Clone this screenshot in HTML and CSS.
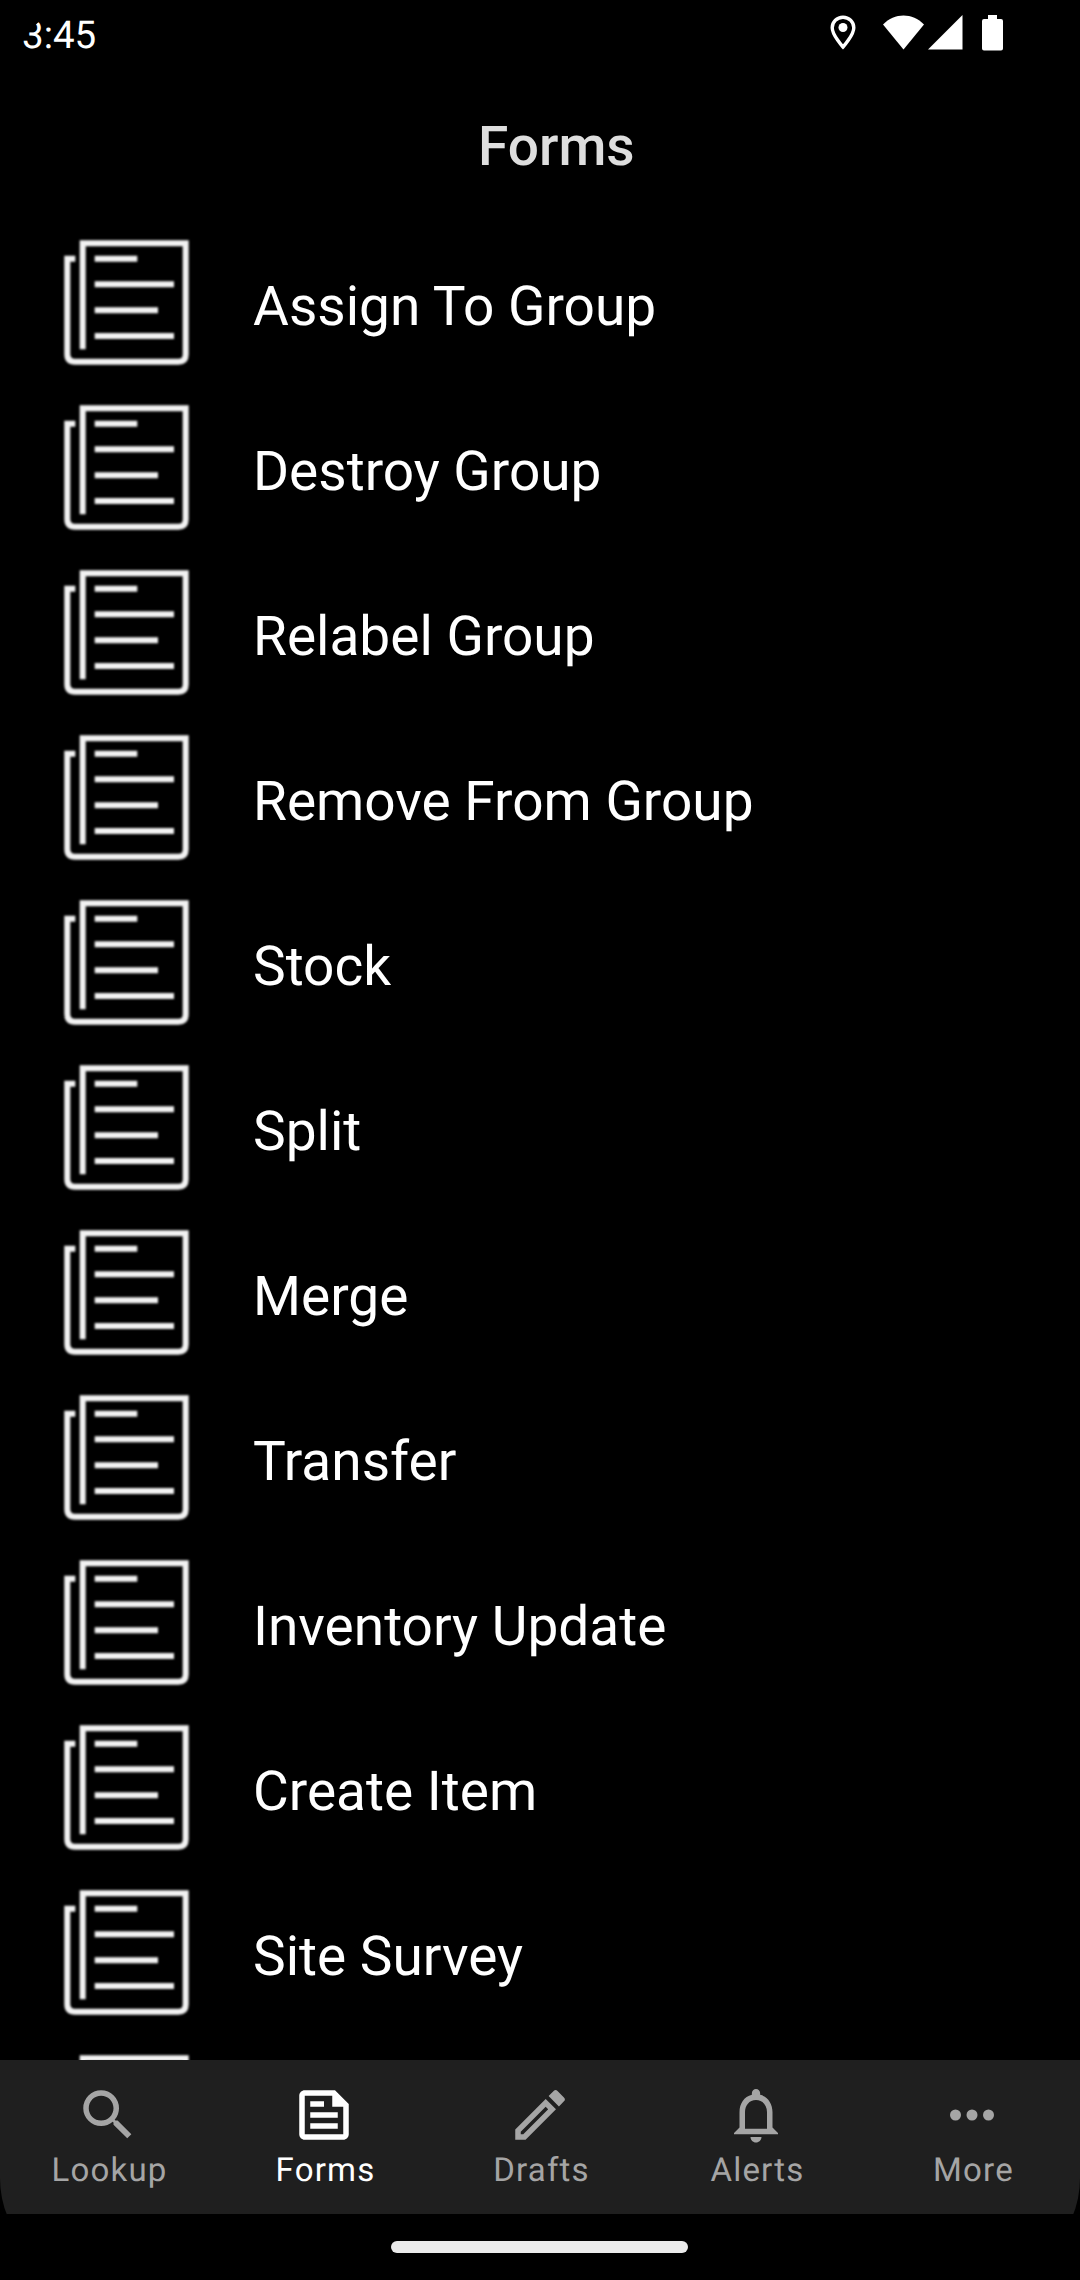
FILE: index.html
```
<!DOCTYPE html>
<html lang="en">
<head>
  <meta charset="UTF-8" />
  <meta name="viewport" content="width=device-width, initial-scale=1.0" />
  <title>Forms</title>
  <link rel="stylesheet" href="styles.css">
</head>
<body>
  <svg class="sprite" width="0" height="0">
    <symbol id="form-icon" viewBox="0 0 132 132">
      <path d="M22.7 113.3V7.3H125.7V118.5Q125.7 125.7 118.5 125.7H15Q7.3 125.7 7.3 118V22.7H15.3M34.7 22.7H77.3M34.7 48.3H114M34.7 74.3H98M34.7 100H114"/>
    </symbol>
  </svg>

  <div class="screen">
    <div class="status-bar">
      <span class="time">3:45</span>
      <div class="status-icons">
        <svg class="pin" viewBox="0 0 26 36"><path d="M13 2.2C7 2.2 2.2 6.9 2.2 12.7C2.2 20 13 32 13 32S23.8 20 23.8 12.7C23.8 6.9 19 2.2 13 2.2Z" fill="none" stroke="#fff" stroke-width="3.4"/><circle cx="13" cy="12.5" r="4.5"/></svg>
        <svg class="wifi" viewBox="0 0 42 35"><path d="M1 9.5C12.5 -2.5 30.5 -2.5 42 9.5L21.5 34.5Z"/></svg>
        <svg class="signal" viewBox="0 0 35 35"><path d="M0 34.5L34.5 0V34.5Z"/></svg>
        <svg class="battery" viewBox="0 0 21 36"><path d="M6 0H15V4H19Q21 4 21 6V33.5Q21 35.5 19 35.5H2Q0 35.5 0 33.5V6Q0 4 2 4H6Z"/></svg>
      </div>
    </div>

    <h1>Forms</h1>

    <ul class="form-list">
      <li><svg><use href="#form-icon"/></svg><span>Assign To Group</span></li>
      <li><svg><use href="#form-icon"/></svg><span>Destroy Group</span></li>
      <li><svg><use href="#form-icon"/></svg><span>Relabel Group</span></li>
      <li><svg><use href="#form-icon"/></svg><span>Remove From Group</span></li>
      <li><svg><use href="#form-icon"/></svg><span>Stock</span></li>
      <li><svg><use href="#form-icon"/></svg><span>Split</span></li>
      <li><svg><use href="#form-icon"/></svg><span>Merge</span></li>
      <li><svg><use href="#form-icon"/></svg><span>Transfer</span></li>
      <li><svg><use href="#form-icon"/></svg><span>Inventory Update</span></li>
      <li><svg><use href="#form-icon"/></svg><span>Create Item</span></li>
      <li><svg><use href="#form-icon"/></svg><span>Site Survey</span></li>
      <li><svg><use href="#form-icon"/></svg></li>
    </ul>

    <nav class="tabs">
      <a class="tab">
        <svg viewBox="0 0 24 24"><path d="M15.5 14h-.79l-.28-.27A6.471 6.471 0 0 0 16 9.5 6.5 6.5 0 1 0 9.5 16c1.61 0 3.09-.59 4.23-1.57l.27.28v.79l5 4.99L20.49 19l-4.99-5zm-6 0C7.01 14 5 11.99 5 9.5S7.01 5 9.5 5 14 7.01 14 9.5 11.99 14 9.5 14z"/></svg>
        <span>Lookup</span>
      </a>
      <a class="tab active">
        <svg viewBox="0 0 24 24"><path fill-rule="evenodd" d="M16 3H5C3.9 3 3 3.9 3 5v14c0 1.1.9 2 2 2h14c1.1 0 2-.9 2-2V8zM19 19H5V5h10v4h4zM7 7h5v2H7zM7 11h10v2H7zM7 15h10v2H7z"/></svg>
        <span>Forms</span>
      </a>
      <a class="tab">
        <svg viewBox="0 0 24 24"><path fill-rule="evenodd" d="M3 17.25V21h3.75L17.81 9.94l-3.75-3.75zM5.92 19H5v-.92l9.06-9.06.92.92zM20.71 5.63l-2.34-2.34a1 1 0 0 0-1.41 0l-1.83 1.83 3.75 3.75 1.83-1.83a1 1 0 0 0 0-1.41z"/></svg>
        <span>Drafts</span>
      </a>
      <a class="tab">
        <svg viewBox="0 0 24 24"><path fill-rule="evenodd" d="M12 22c1.1 0 2-.9 2-2h-4c0 1.1.9 2 2 2zM18 16.5V11c0-3.07-1.63-5.64-4.5-6.32V4c0-.83-.67-1.5-1.5-1.5s-1.5.67-1.5 1.5v.68C7.64 5.36 6 7.92 6 11v5.5l-2 2V19h16v-.5zM16 17H8v-6c0-2.48 1.51-4.5 4-4.5s4 2.02 4 4.5z"/></svg>
        <span>Alerts</span>
      </a>
      <a class="tab">
        <svg viewBox="0 0 24 24"><circle cx="6" cy="12" r="2"/><circle cx="12" cy="12" r="2"/><circle cx="18" cy="12" r="2"/></svg>
        <span>More</span>
      </a>
    </nav>

    <div class="gesture-bar"><div class="handle"></div></div>
  </div>
</body>
</html>
```

FILE: styles.css
```
* {
  margin: 0; padding: 0; box-sizing: border-box;
}
body {
  font-family: Roboto, sans-serif;
  background: #000;
  color: #fff;
  text-rendering: geometricPrecision;
}
.sprite {
  display: block;
}
/* rounded display corners */
.screen {
  width: 1080px;
  height: 2280px;
  display: flex;
  flex-direction: column;
  overflow: hidden;
  border-radius: 102px;
}
.status-bar {
  height: 66px;
  padding: 0 77px 0 22px;
  display: flex;
  justify-content: space-between;
}
.time {
  font-size: 38.5px;
  line-height: 45px;
  padding-top: 13px;
}
.status-icons {
  display: flex;
  align-items: flex-start;
  padding-top: 15px;
}
.status-icons svg {
  display: block;
  fill: #fff;
}
.pin {
  width: 26px;
  height: 36px;
  margin-right: 26px;
}
.wifi {
  width: 42px;
  height: 35px;
  margin-right: 4px;
}
.signal {
  width: 35px;
  height: 35px;
  margin-right: 19px;
}
.battery {
  width: 21px;
  height: 36px;
}
h1 {
  height: 153px;
  padding: 49px 0 0 478px;
  font-size: 55px;
  line-height: 64px;
  font-weight: 500;
  color: #dedede;
}
.form-list {
  flex: 1;
  min-height: 0;
  overflow: hidden;
  list-style: none;
}
.form-list li {
  height: 165px;
  padding: 0 60px;
  display: flex;
  align-items: center;
  gap: 61px;
  font-size: 55px;
  line-height: 64px;
}
.form-list span {
  padding-top: 10px;
}
.form-list svg {
  width: 132px;
  height: 132px;
  fill: none;
  stroke: #f2f2f2;
  stroke-width: 6;
  filter: blur(0.8px);
}

/* Bottom navigation */
.tabs {
  height: 154px;
  flex: none;
  display: flex;
  background: #1f1f1f;
}
.tab {
  flex: 1;
  padding-top: 22px;
  display: flex;
  flex-direction: column;
  align-items: center;
  color: #a5a5a5;
  font-size: 33px;
  line-height: 39px;
  letter-spacing: 1.2px;
}
.tab.active {
  color: #fff;
}
.tab svg {
  width: 66px;
  height: 66px;
  fill: currentColor;
}
.tab span {
  padding: 3px 0 0 3px;
}
.gesture-bar {
  height: 66px;
  flex: none;
  display: flex;
  align-items: center;
  justify-content: center;
  padding-right: 2px;
}
.handle {
  width: 297px;
  height: 12px;
  border-radius: 6px;
  background: #ebebeb;
}
```
